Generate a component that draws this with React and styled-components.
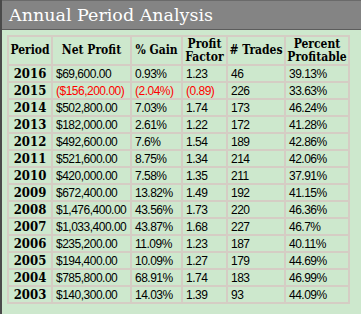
import React from 'react';
import styled, { createGlobalStyle } from 'styled-components';

const serif = `"DejaVu Serif Condensed", "DejaVu Serif", serif`;
const sans = `"Liberation Sans", Arial, sans-serif`;

const GlobalStyle = createGlobalStyle`
  html, body {
    margin: 0;
    padding: 0;
    background: #cde8cd;
  }
`;

const Window = styled.div`
  min-height: 100vh;
  box-sizing: border-box;
  border-left: 2px solid #4a4a4a;
  background-color: #cde8cd;
  display: flex;
  flex-direction: column;
`;

const TitleBar = styled.div`
  height: 30px;
  box-sizing: border-box;
  background-color: #848484;
  border-top: 1px solid #6a6a6a;
  border-bottom: 1px solid #5c5c5c;
  display: flex;
  align-items: center;
  padding-left: 7px;
  color: #ffffff;
  font-family: "DejaVu Serif", serif;
  font-size: 17.5px;
`;

const Body = styled.div`
  padding: 5px 0 0 5px;
`;

const Grid = styled.table`
  border-collapse: separate;
  border-spacing: 0;
  table-layout: fixed;
  width: 343px;
  border-left: 2px solid #d5cdc4;
  border-top: 2px solid #d5cdc4;
`;

const HeadCell = styled.th`
  box-sizing: border-box;
  height: 29px;
  padding: 0 1px;
  border-right: 2px solid #d5cdc4;
  border-bottom: 2px solid #d5cdc4;
  font-family: ${serif};
  font-stretch: condensed;
  font-weight: bold;
  font-size: 12px;
  line-height: 13px;
  text-align: center;
  vertical-align: middle;
  white-space: nowrap;
  color: #000;
`;

const Cell = styled.td`
  box-sizing: border-box;
  height: 17px;
  padding: 0 0 0 3px;
  border-right: 2px solid #d5cdc4;
  border-bottom: 2px solid #d5cdc4;
  font-family: ${sans};
  font-size: 12px;
  letter-spacing: -0.5px;
  line-height: 14px;
  white-space: nowrap;
  vertical-align: middle;
  color: ${p => (p.$loss ? '#ff0000' : '#000')};
`;

const YearCell = styled(Cell)`
  padding: 0;
  text-align: center;
  font-family: ${serif};
  font-stretch: condensed;
  font-weight: bold;
  font-size: 13px;
  letter-spacing: 0;
  color: #000;
`;

const widths = [44, 79, 51, 45, 58, 64];

const rows = [
  ['2016', '$69,600.00', '0.93%', '1.23', '46', '39.13%'],
  ['2015', '($156,200.00)', '(2.04%)', '(0.89)', '226', '33.63%', true],
  ['2014', '$502,800.00', '7.03%', '1.74', '173', '46.24%'],
  ['2013', '$182,000.00', '2.61%', '1.22', '172', '41.28%'],
  ['2012', '$492,600.00', '7.6%', '1.54', '189', '42.86%'],
  ['2011', '$521,600.00', '8.75%', '1.34', '214', '42.06%'],
  ['2010', '$420,000.00', '7.58%', '1.35', '211', '37.91%'],
  ['2009', '$672,400.00', '13.82%', '1.49', '192', '41.15%'],
  ['2008', '$1,476,400.00', '43.56%', '1.73', '220', '46.36%'],
  ['2007', '$1,033,400.00', '43.87%', '1.68', '227', '46.7%'],
  ['2006', '$235,200.00', '11.09%', '1.23', '187', '40.11%'],
  ['2005', '$194,400.00', '10.09%', '1.27', '179', '44.69%'],
  ['2004', '$785,800.00', '68.91%', '1.74', '183', '46.99%'],
  ['2003', '$140,300.00', '14.03%', '1.39', '93', '44.09%'],
];

const App = () => {
  return (
    <>
      <GlobalStyle />
      <Window>
        <TitleBar>Annual Period Analysis</TitleBar>
        <Body>
          <Grid>
            <colgroup>
              {widths.map((w, i) => <col key={i} style={{ width: w }} />)}
            </colgroup>
            <thead>
              <tr>
                <HeadCell>Period</HeadCell>
                <HeadCell>Net Profit</HeadCell>
                <HeadCell>% Gain</HeadCell>
                <HeadCell>Profit<br />Factor</HeadCell>
                <HeadCell># Trades</HeadCell>
                <HeadCell>Percent<br />Profitable</HeadCell>
              </tr>
            </thead>
            <tbody>
              {rows.map(r => {
                const loss = r[6] === true;
                return (
                  <tr key={r[0]}>
                    <YearCell>{r[0]}</YearCell>
                    <Cell $loss={loss}>{r[1]}</Cell>
                    <Cell $loss={loss}>{r[2]}</Cell>
                    <Cell $loss={loss}>{r[3]}</Cell>
                    <Cell>{r[4]}</Cell>
                    <Cell>{r[5]}</Cell>
                  </tr>
                );
              })}
            </tbody>
          </Grid>
        </Body>
      </Window>
    </>
  );
};

export default App;
